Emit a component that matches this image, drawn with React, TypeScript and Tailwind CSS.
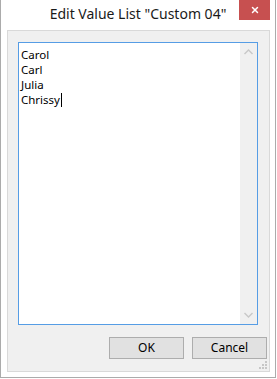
import { X } from "lucide-react"

const values = ["Carol", "Carl", "Julia", "Chrissy"]

export default function App() {
  return (
    <div className="w-[277px] h-[379px] bg-white font-['Segoe_UI','Noto_Sans',sans-serif]">
      <div className="w-[276px] h-[378px] border-x border-b border-[#ababab] flex flex-col">
        {/* title bar */}
        <div className="relative h-[30px] flex items-start justify-center">
          <span className="mt-[5px] text-[14px] leading-[18px] text-[#1a1a1a]">Edit Value List "Custom 04"</span>
          <div className="absolute top-0 right-[5px] w-[31px] h-[20px] bg-[#c75050] flex items-center justify-center">
            <X className="w-[10px] h-[10px] text-white" strokeWidth={3.5} />
          </div>
        </div>

        {/* client area */}
        <div className="ml-[6px] mr-[5px] h-[342px] border border-[#d9d9d9] bg-[#f0f0f0] pl-[10px] pt-[11px] relative">
          <div className="w-[240px] h-[283px] border border-[#569de5] bg-white flex">
            <div className="flex-1 pl-[2px] pt-[4px] text-[11.5px] leading-[15px] text-black">
              {values.map((v, i) => (
                <div key={v} className="h-[15px] flex items-center">
                  <span>{v}</span>
                  {i === values.length - 1 && <span className="ml-px w-px h-[14px] bg-black" />}
                </div>
              ))}
            </div>
            <div className="w-[17px] bg-[#f0f0f0] flex flex-col justify-between items-center py-[6px]">
              <svg width="9" height="6" viewBox="0 0 9 6">
                <path d="M0.5 5 L4.5 1 L8.5 5" fill="none" stroke="#c8c8c8" strokeWidth="1.4" />
              </svg>
              <svg width="9" height="6" viewBox="0 0 9 6">
                <path d="M0.5 1 L4.5 5 L8.5 1" fill="none" stroke="#c8c8c8" strokeWidth="1.4" />
              </svg>
            </div>
          </div>

          <div className="flex justify-end gap-[8px] mt-[12px] w-[249px]">
            <button className="w-[75px] h-[22px] border border-[#adadad] bg-[#e1e1e1] text-[12px] text-black">OK</button>
            <button className="w-[75px] h-[22px] border border-[#adadad] bg-[#e1e1e1] text-[12px] text-black">Cancel</button>
          </div>

          {/* resize grip */}
          <svg className="absolute right-[1px] bottom-[1px]" width="11" height="11" viewBox="0 0 11 11">
            {[[9, 1], [9, 4], [6, 4], [9, 7], [6, 7], [3, 7]].map(([x, y]) => (
              <rect key={`${x}-${y}`} x={x - 1} y={y + 1} width="2" height="2" fill="#c6c6c6" />
            ))}
          </svg>
        </div>
      </div>
    </div>
  )
}
